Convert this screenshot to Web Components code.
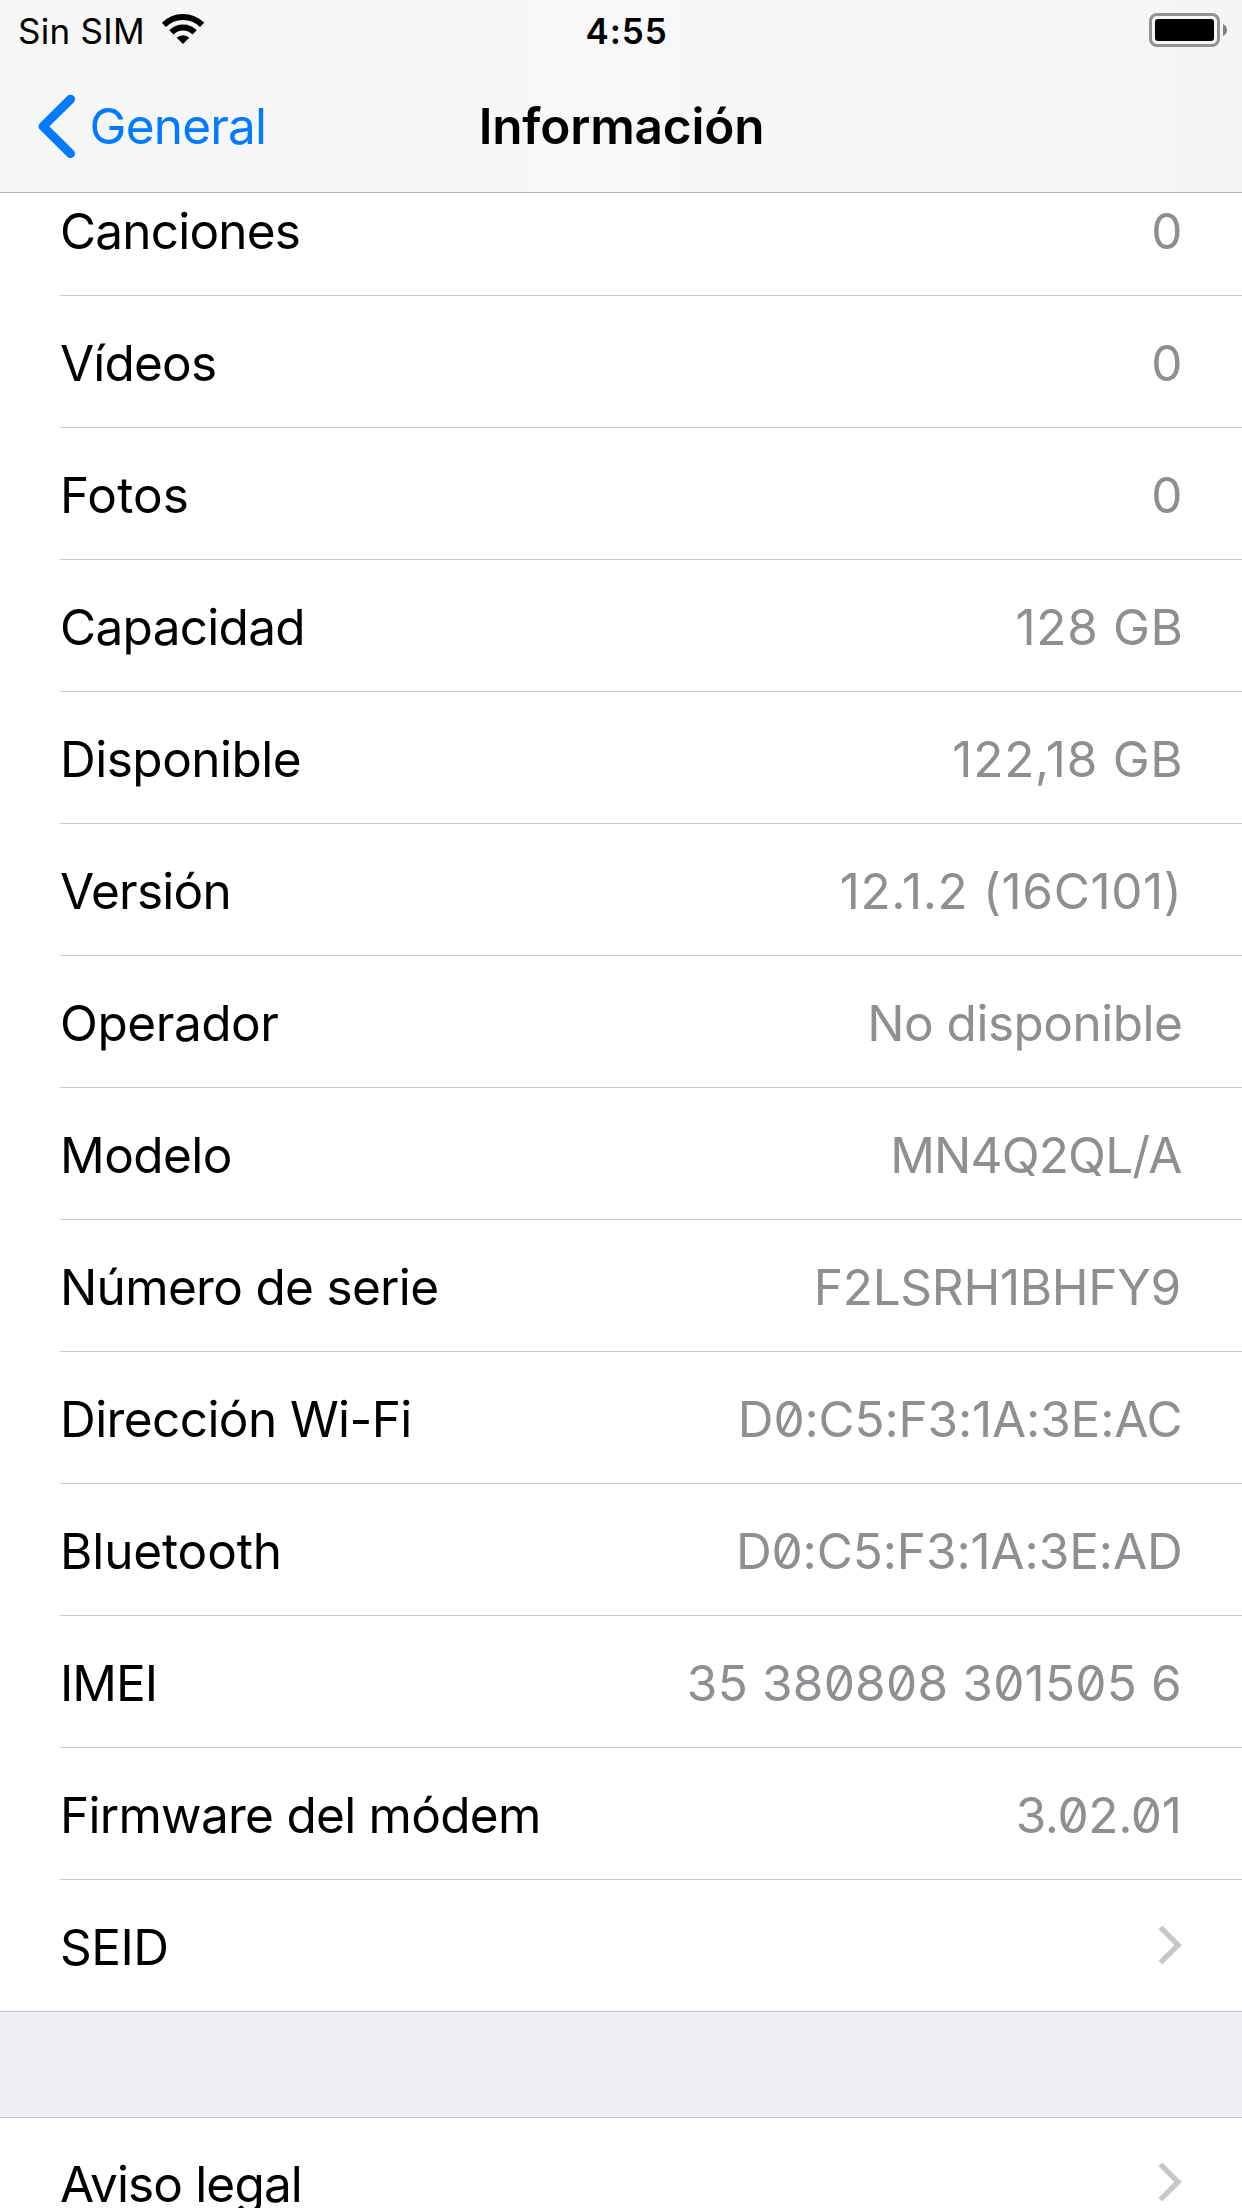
<!DOCTYPE html>
<html lang="es">
<head>
<meta charset="utf-8">
<title>Información</title>
<style>
  html, body {
    margin: 0;
    height: 2208px;
    overflow: hidden;
    background: #efeff4;
    font-family: Inter, "Liberation Sans", sans-serif;
    font-size: 49.5px;
    color: #000;
  }
</style>
</head>
<body>

<settings-screen>
  <status-bar slot="top" carrier="Sin SIM" time="4:55"></status-bar>
  <nav-bar slot="top" back="General">Información</nav-bar>

  <row-group>
    <info-row tracking="-.8">Canciones<span slot="value">0</span></info-row>
    <info-row tracking="-.8">Vídeos<span slot="value">0</span></info-row>
    <info-row tracking=".1">Fotos<span slot="value">0</span></info-row>
    <info-row tracking="-.7" value-tracking=".62" inset="-1">Capacidad<span slot="value">128 GB</span></info-row>
    <info-row tracking="-.5" value-tracking=".74" inset="-1">Disponible<span slot="value">122,18 GB</span></info-row>
    <info-row tracking="-.75" value-tracking=".62">Versión<span slot="value">12.1.2 (16C101)</span></info-row>
    <info-row tracking="-.44" value-tracking="-.49">Operador<span slot="value">No disponible</span></info-row>
    <info-row tracking="-.55" value-tracking="-.81" inset="1">Modelo<span slot="value">MN4Q2QL/A</span></info-row>
    <info-row tracking="-.68" value-tracking="-.29" inset="1.5">Número de serie<span slot="value">F2LSRH1BHFY9</span></info-row>
    <info-row tracking="-.59" value-tracking="-.17" slashed>Dirección Wi-Fi<span slot="value">D0:C5:F3:1A:3E:AC</span></info-row>
    <info-row tracking="-.12" value-tracking="-.13" slashed>Bluetooth<span slot="value">D0:C5:F3:1A:3E:AD</span></info-row>
    <info-row tracking="-1" value-tracking=".21" inset=".5" slashed>IMEI<span slot="value">35 380808 301505 6</span></info-row>
    <info-row tracking="-.72" value-tracking="-.34" inset="1" slashed>Firmware del módem<span slot="value">3.02.01</span></info-row>
    <info-row tracking="-.55" last>SEID<disclosure-icon slot="value"></disclosure-icon></info-row>
  </row-group>

  <row-group>
    <info-row tracking="-.85" last>Aviso legal<disclosure-icon slot="value"></disclosure-icon></info-row>
  </row-group>
</settings-screen>

<script>
class SettingsScreen extends HTMLElement {
  constructor() {
    super();
    this.attachShadow({ mode: "open" }).innerHTML = `
    <style>
    :host {
      display: flex;
      flex-direction: column;
      height: 2208px;
      overflow: hidden;
    }
    header {
      flex: none;
      position: relative;
      z-index: 1;
      background: linear-gradient(90deg, #f6f6f6, #f8f8f8 50%, #f5f5f5);
      border-bottom: 1px solid #b2b2b2;
    }
    /* the list is scrolled a little under the header */
    main {
      display: flex;
      flex-direction: column;
      gap: 105px;
      margin-top: -29px;
    }
    </style>
    <header><slot name="top"></slot></header>
    <main><slot></slot></main>`;
  }
}
customElements.define("settings-screen", SettingsScreen);

class StatusBar extends HTMLElement {
  constructor() {
    super();
    this.attachShadow({ mode: "open" }).innerHTML = `
    <style>
    :host {
      display: grid;
      grid-template-columns: 1fr auto 1fr;
      align-items: center;
      box-sizing: border-box;
      height: 60px;
      padding: 2px 15px 0 18px;
      font-size: 35px;
    }
    .left {
      display: flex;
      align-items: center;
      gap: 16px;
      letter-spacing: .29px;
    }
    .time {
      padding-left: 8px;
      font-weight: 600;
      letter-spacing: .9px;
    }
    svg { display: block; }
    .wifi { margin-top: -4px; }
    .battery { justify-self: end; margin-top: -2px; }
    </style>
    <div class="left">
      <span>${this.getAttribute("carrier")}</span>
      <svg class="wifi" width="44" height="32" viewBox="0 0 44 32" fill="none" stroke="#000">
        <path d="M2.9 11.9a27 27 0 0 1 38.2 0" stroke-width="5.8"/>
        <path d="M10.4 19.4a16.4 16.4 0 0 1 23.2 0" stroke-width="6"/>
        <path d="M22 31l-6.3-6.3a9 9 0 0 1 12.6 0z" fill="#000" stroke="none"/>
      </svg>
    </div>
    <span class="time">${this.getAttribute("time")}</span>
    <svg class="battery" width="78" height="34" viewBox="0 0 78 34">
      <rect x="1.5" y="1.5" width="68" height="31" rx="6.5" fill="none" stroke="#929292" stroke-width="3"/>
      <rect x="6" y="6" width="59" height="22" rx="3"/>
      <path d="M74 11q4 2 4 6t-4 6z" fill="#808080"/>
    </svg>`;
  }
}
customElements.define("status-bar", StatusBar);

class NavBar extends HTMLElement {
  constructor() {
    super();
    this.attachShadow({ mode: "open" }).innerHTML = `
    <style>
    :host {
      display: grid;
      grid-template-columns: 1fr auto 1fr;
      align-items: center;
      height: 132px;
    }
    .back {
      display: flex;
      align-items: center;
      gap: 13.5px;
      padding-left: 38px;
      color: #007aff;
      letter-spacing: -.8px;
    }
    .title {
      padding-left: 1px;
      font-weight: 600;
      letter-spacing: -.17px;
    }
    svg { display: block; }
    </style>
    <div class="back">
      <svg width="38" height="64" viewBox="0 0 38 64" fill="none" stroke="currentColor" stroke-width="9" stroke-linecap="round" stroke-linejoin="round">
        <path d="M32.5 5.2L5 32.4l27.5 27.2"/>
      </svg>
      <span>${this.getAttribute("back")}</span>
    </div>
    <span class="title"><slot></slot></span>`;
  }
}
customElements.define("nav-bar", NavBar);

class RowGroup extends HTMLElement {
  constructor() {
    super();
    this.attachShadow({ mode: "open" }).innerHTML = `
    <style>
    :host {
      display: block;
      flex: none;
      background: #fff;
      box-shadow: inset 0 1px #c8c7cc, inset 0 -1px #c8c7cc;
    }
    </style>
    <slot></slot>`;
  }
}
customElements.define("row-group", RowGroup);

class InfoRow extends HTMLElement {
  constructor() {
    super();
    const px = (name) => (this.getAttribute(name) || 0) + "px";
    this.attachShadow({ mode: "open" }).innerHTML = `
    <style>
    :host {
      display: block;
      padding-left: 60px;
    }
    .row {
      display: flex;
      align-items: center;
      justify-content: space-between;
      box-sizing: border-box;
      height: 132px;
      padding: 2px 59.5px 0 0;
      border-bottom: 1px solid #c8c7cc;
      white-space: nowrap;
    }
    :host([last]) .row { border-bottom-color: transparent; }
    .label { letter-spacing: ${px("tracking")}; }
    .value {
      margin-right: ${px("inset")};
      color: #8e8e93;
      letter-spacing: ${px("value-tracking")};
    }
    :host([slashed]) .value { font-feature-settings: "zero"; }
    </style>
    <div class="row">
      <span class="label"><slot></slot></span>
      <span class="value"><slot name="value"></slot></span>
    </div>`;
  }
}
customElements.define("info-row", InfoRow);

class DisclosureIcon extends HTMLElement {
  constructor() {
    super();
    this.attachShadow({ mode: "open" }).innerHTML = `
    <style>
    :host {
      display: flex;
      margin: -3px .5px 0 0;
    }
    </style>
    <svg width="24" height="40" viewBox="0 0 24 40" fill="none" stroke="#c7c7cc" stroke-width="5.3">
      <path d="M2.4 2.3L20.2 20 2.4 37.7"/>
    </svg>`;
  }
}
customElements.define("disclosure-icon", DisclosureIcon);
</script>
</body>
</html>
